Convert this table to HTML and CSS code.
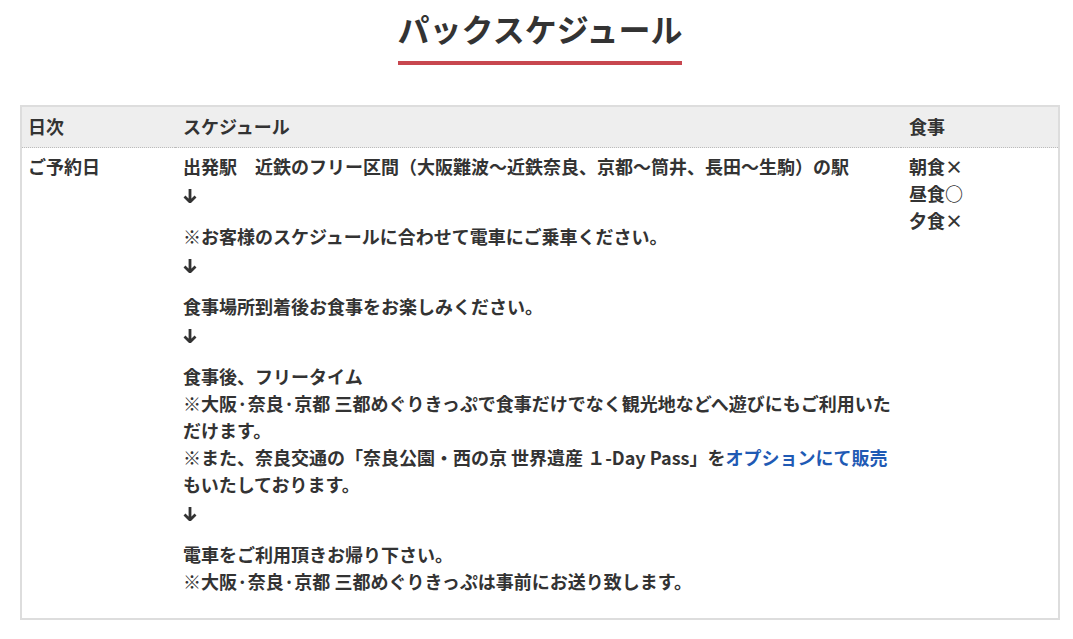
FILE: index.html
```html
<!DOCTYPE html>
<html lang="ja">
<head>
    <meta charset="UTF-8">
    <meta name="viewport" content="width=device-width, initial-scale=1.0">
    <title>パックスケジュール</title>
    <link rel="stylesheet" href="styles.css">
</head>
<body>
    <div class="container">
        <div class="heading">
            <h2 class="title">パックスケジュール</h2>
        </div>
        <table class="schedule">
            <thead>
                <tr>
                    <th class="col-day">日次</th>
                    <th class="col-plan">スケジュール</th>
                    <th class="col-meal">食事</th>
                </tr>
            </thead>
            <tbody>
                <tr>
                    <td class="col-day">ご予約日</td>
                    <td>
                        <p>出発駅　近鉄のフリー区間（大阪難波〜近鉄奈良、京都〜筒井、長田〜生駒）の駅<br><svg class="arrow" width="14" height="14" viewBox="0 0 14 14"><path d="M7 0V12.5M1.5 7.5L7 13L12.5 7.5"/></svg></p>
                        <p>※お客様のスケジュールに合わせて電車にご乗車ください。<br><svg class="arrow" width="14" height="14" viewBox="0 0 14 14"><path d="M7 0V12.5M1.5 7.5L7 13L12.5 7.5"/></svg></p>
                        <p>食事場所到着後お食事をお楽しみください。<br><svg class="arrow" width="14" height="14" viewBox="0 0 14 14"><path d="M7 0V12.5M1.5 7.5L7 13L12.5 7.5"/></svg></p>
                        <p>食事後、フリータイム<br>※大阪·奈良·京都 三都めぐりきっぷで食事だけでなく観光地などへ遊びにもご利用いただけます。<br>※また、奈良交通の「奈良公園・西の京 世界遺産 １-Day Pass」を<a href="#">オプションにて販売</a>もいたしております。<br><svg class="arrow" width="14" height="14" viewBox="0 0 14 14"><path d="M7 0V12.5M1.5 7.5L7 13L12.5 7.5"/></svg></p>
                        <p>電車をご利用頂きお帰り下さい。<br>※大阪·奈良·京都 三都めぐりきっぷは事前にお送り致します。</p>
                    </td>
                    <td>朝食×<br>昼食○<br>夕食×</td>
                </tr>
            </tbody>
        </table>
    </div>
</body>
</html>
```

FILE: styles.css
```css
body {
    margin: 0;
    font-family: "Noto Sans CJK JP", "Noto Sans", sans-serif;
    font-weight: bold;
    color: #333;
    background: #fff;
}
.container {
    width: 1040px;
    margin-left: 20px;
}
.heading {
    text-align: center;
    padding-top: 4px;
    margin-bottom: 40px;
}
.title {
    display: inline-block;
    margin: 0;
    font-size: 32px;
    line-height: 48px;
    padding-bottom: 9px;
    border-bottom: 4px solid #c8474f;
}
.schedule {
    width: 100%;
    border-collapse: collapse;
    border: 2px solid #ddd;
    font-size: 18px;
    line-height: 27px;
}
.schedule th {
    text-align: left;
    background: #eee;
    padding: 6px 8px 7px;
    border-bottom: 1px dotted #bbb;
}
.schedule td {
    vertical-align: top;
    padding: 5px 8px 7px;
}
.schedule .col-day {
    width: 139px;
    padding-left: 6px;
}
.col-plan {
    width: 710px;
}
.schedule p {
    margin: 0 0 16px;
}
.schedule a {
    color: #1f5ab4;
    text-decoration: none;
}
.arrow {
    display: inline-block;
    width: 14px;
    height: 14px;
    vertical-align: -2px;
    fill: none;
    stroke: #333;
    stroke-width: 2.8;
}
```
